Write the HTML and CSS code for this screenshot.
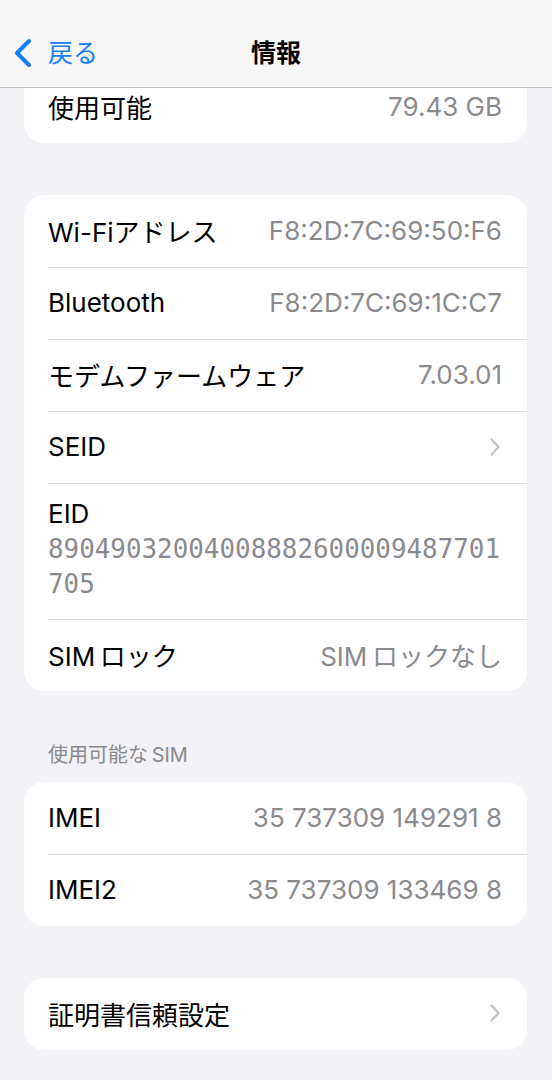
FILE: index.html
```html
<!doctype html>
<html lang="ja">
<head>
    <meta charset="UTF-8">
    <title>情報</title>
    <link rel="stylesheet" href="styles.css">
</head>
<body>
    <header class="nav">
        <a class="back" href="#">
            <svg class="back-icon" viewBox="0 0 20 30" width="20" height="30">
                <path d="M16 3 L4 15 L16 27" fill="none" stroke="#157efb" stroke-width="4" stroke-linecap="round" stroke-linejoin="round"/>
            </svg>
            <span>戻る</span>
        </a>
        <h1 class="title">情報</h1>
        <div></div>
    </header>

    <main class="content">
        <section class="group group-top">
            <div class="row">
                <span class="label">使用可能</span>
                <span class="value">79.43 GB</span>
            </div>
        </section>

        <section class="group">
            <div class="row">
                <span class="label">Wi-Fiアドレス</span>
                <span class="value">F8:2D:7C:69:50:F6</span>
            </div>
            <div class="row">
                <span class="label">Bluetooth</span>
                <span class="value">F8:2D:7C:69:1C:C7</span>
            </div>
            <div class="row">
                <span class="label">モデムファームウェア</span>
                <span class="value">7.03.01</span>
            </div>
            <div class="row">
                <span class="label">SEID</span>
                <svg class="chevron" viewBox="0 0 12 20" width="12" height="20">
                    <path d="M2.5 2.5 L9.5 10 L2.5 17.5" fill="none" stroke="#c4c4c7" stroke-width="2.4" stroke-linecap="round" stroke-linejoin="round"/>
                </svg>
            </div>
            <div class="row row-stack">
                <span class="label">EID</span>
                <span class="code">89049032004008882600009487701705</span>
            </div>
            <div class="row">
                <span class="label">SIM&#8201;ロック</span>
                <span class="value">SIM&#8201;ロックなし</span>
            </div>
        </section>

        <h2 class="section-label">使用可能な&#8201;SIM</h2>
        <section class="group group-after-label">
            <div class="row">
                <span class="label">IMEI</span>
                <span class="value">35 737309 149291 8</span>
            </div>
            <div class="row">
                <span class="label">IMEI2</span>
                <span class="value">35 737309 133469 8</span>
            </div>
        </section>

        <section class="group">
            <div class="row">
                <span class="label">証明書信頼設定</span>
                <svg class="chevron" viewBox="0 0 12 20" width="12" height="20">
                    <path d="M2.5 2.5 L9.5 10 L2.5 17.5" fill="none" stroke="#c4c4c7" stroke-width="2.4" stroke-linecap="round" stroke-linejoin="round"/>
                </svg>
            </div>
        </section>
    </main>
</body>
</html>
```

FILE: styles.css
```css
body {
    margin: 0;
    padding: 0;
    background-color: #f2f2f7;
    font-family: Inter, "Noto Sans CJK JP", sans-serif;
    color: #000;
    height: 1080px;
    overflow: hidden;
}
.nav {
    height: 88px;
    box-sizing: border-box;
    padding-bottom: 16px;
    display: grid;
    grid-template-columns: 1fr auto 1fr;
    align-items: end;
    background-color: #f7f7f7;
    border-bottom: 1px solid #c4c4c6;
}
.back {
    display: flex;
    align-items: center;
    color: #157efb;
    text-decoration: none;
    font-size: 25px;
    line-height: 36px;
    padding-left: 13px;
}
.back-icon {
    margin-right: 15px;
}
.title {
    margin: 0;
    font-size: 25px;
    line-height: 36px;
    font-weight: 700;
}
.content {
    overflow: hidden;
    padding: 0 25px 0 24px;
}
.group {
    background-color: #fff;
    border-radius: 20px;
    margin-top: 52px;
}
.group-top {
    margin-top: -17px;
}
.group-after-label {
    margin-top: 0;
}
.row {
    height: 72px;
    box-sizing: border-box;
    margin-left: 24px;
    padding-right: 25px;
    padding-bottom: 2px;
    display: flex;
    justify-content: space-between;
    align-items: center;
    border-top: 1px solid #e0e0e4;
    font-size: 26px;
}
.row:first-child {
    border-top: none;
}
.row-stack {
    height: 136px;
    display: block;
    padding-top: 12px;
}
.row-stack .label {
    display: block;
    line-height: 36px;
}
.value {
    color: #8a8a8e;
}
.code {
    display: block;
    color: #8a8a8e;
    font-family: "DejaVu Sans Mono", monospace;
    font-size: 25.9px;
    line-height: 35px;
    word-break: break-all;
}
.chevron {
    margin-right: 1px;
}
.section-label {
    margin: 0;
    padding: 51px 0 13px 24px;
    font-size: 20px;
    line-height: 27px;
    font-weight: 400;
    color: #8a8a8e;
}
```
